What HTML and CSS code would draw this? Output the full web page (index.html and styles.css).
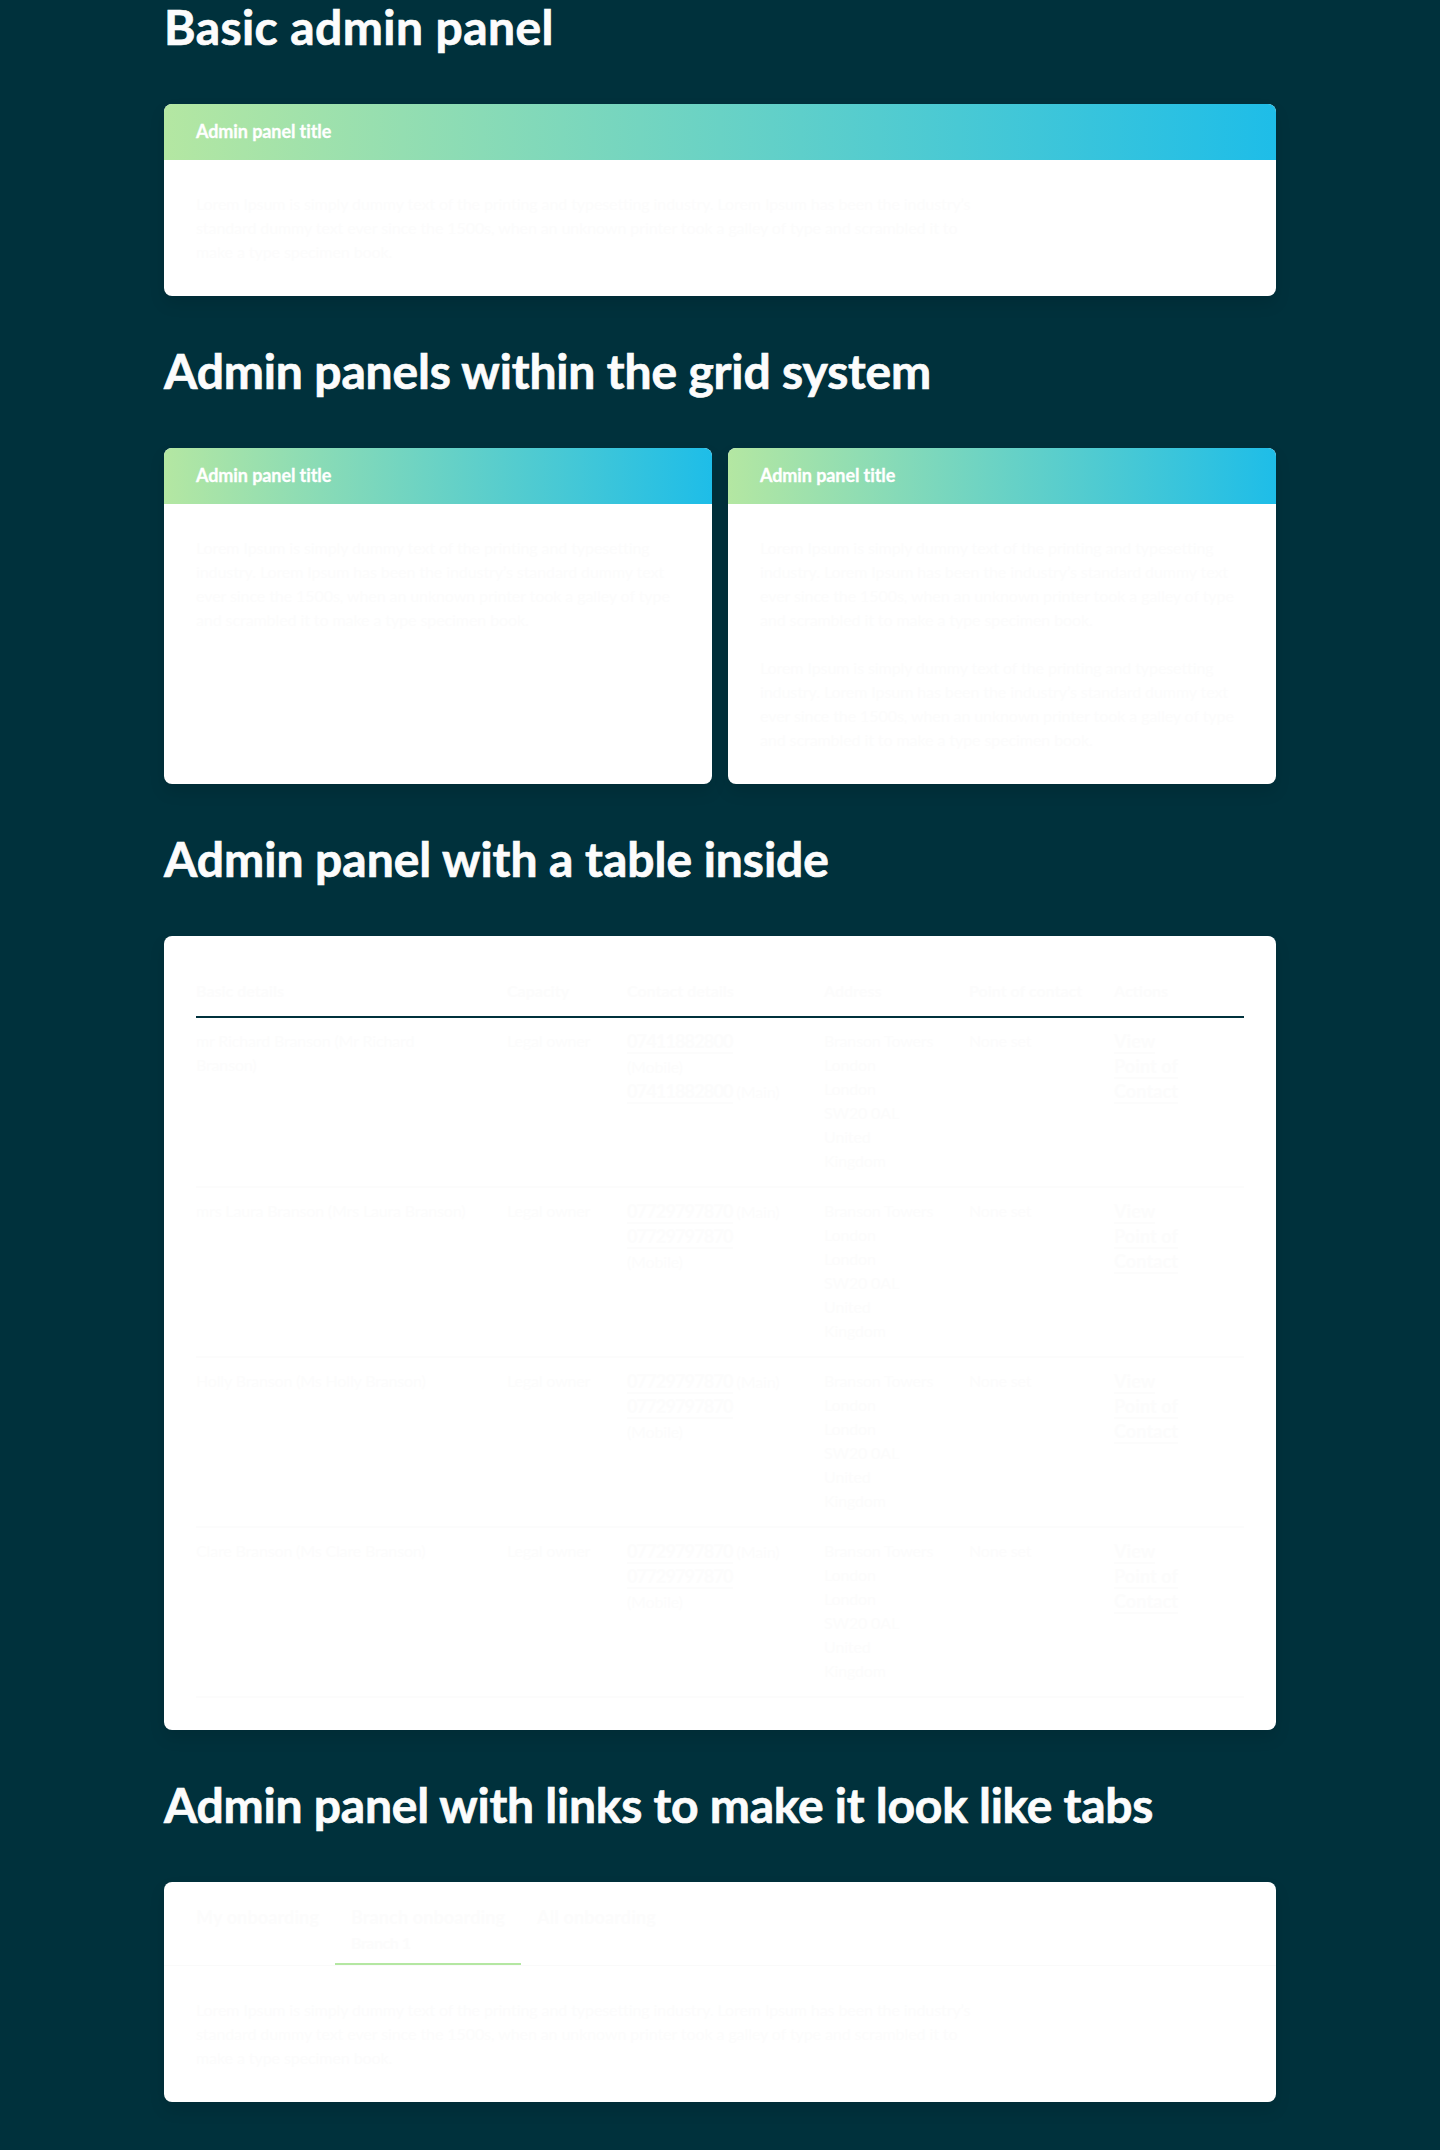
FILE: index.html
```html
<!DOCTYPE html>
<html lang="en">
<head>
<meta charset="utf-8">
<title>Admin panels</title>
<link rel="stylesheet" href="styles.css">
</head>
<body>
<main class="page">
  <h2 class="heading heading--basic">Basic admin panel</h2>
  <section class="panel">
    <h3 class="panel__title">Admin panel title</h3>
    <div class="panel__body">
      <p>Lorem Ipsum is simply dummy text of the printing and typesetting industry. Lorem Ipsum has been the industry’s<br>standard dummy text ever since the 1500s, when an unknown printer took a galley of type and scrambled it to<br>make a type specimen book.</p>
    </div>
  </section>

  <h2 class="heading heading--grid">Admin panels within the grid system</h2>
  <div class="grid">
    <section class="panel">
      <h3 class="panel__title">Admin panel title</h3>
      <div class="panel__body">
        <p>Lorem Ipsum is simply dummy text of the printing and typesetting<br>industry. Lorem Ipsum has been the industry’s standard dummy text<br>ever since the 1500s, when an unknown printer took a galley of type<br>and scrambled it to make a type specimen book.</p>
      </div>
    </section>
    <section class="panel">
      <h3 class="panel__title">Admin panel title</h3>
      <div class="panel__body">
        <p>Lorem Ipsum is simply dummy text of the printing and typesetting<br>industry. Lorem Ipsum has been the industry’s standard dummy text<br>ever since the 1500s, when an unknown printer took a galley of type<br>and scrambled it to make a type specimen book.</p>
        <p>Lorem Ipsum is simply dummy text of the printing and typesetting<br>industry. Lorem Ipsum has been the industry’s standard dummy text<br>ever since the 1500s, when an unknown printer took a galley of type<br>and scrambled it to make a type specimen book.</p>
      </div>
    </section>
  </div>

  <h2 class="heading heading--table">Admin panel with a table inside</h2>
  <section class="panel">
    <div class="panel__body">
      <table class="table">
        <colgroup><col class="col-basic"><col class="col-capacity"><col class="col-contact"><col class="col-address"><col class="col-point"><col class="col-actions"></colgroup>
        <thead>
          <tr><th>Basic details</th><th>Capacity</th><th>Contact details</th><th>Address</th><th>Point of contact</th><th>Actions</th></tr>
        </thead>
        <tbody>
          <tr>
            <td>mr Richard Branson (Mr Richard<br>Branson)</td>
            <td>Legal owner</td>
            <td class="links"><a class="link link--phone" href="#">07411882800</a><br>(Mobile)<br><a class="link link--phone" href="#">07411882800</a> (Main)</td>
            <td>Branson Towers<br>London<br>London<br>SW20 0AL<br>United<br>Kingdom</td>
            <td>None set</td>
            <td class="links"><a class="link" href="#">View</a><br><a class="link" href="#">Point of<br>Contact</a></td>
          </tr>
          <tr>
            <td>mrs Laura Branson (Mrs Laura Branson)</td>
            <td>Legal owner</td>
            <td class="links"><a class="link link--phone" href="#">07729797870</a> (Main)<br><a class="link link--phone" href="#">07729797870</a><br>(Mobile)</td>
            <td>Branson Towers<br>London<br>London<br>SW20 0AL<br>United<br>Kingdom</td>
            <td>None set</td>
            <td class="links"><a class="link" href="#">View</a><br><a class="link" href="#">Point of<br>Contact</a></td>
          </tr>
          <tr>
            <td>Holly Branson (Ms Holly Branson)</td>
            <td>Legal owner</td>
            <td class="links"><a class="link link--phone" href="#">07729797870</a> (Main)<br><a class="link link--phone" href="#">07729797870</a><br>(Mobile)</td>
            <td>Branson Towers<br>London<br>London<br>SW20 0AL<br>United<br>Kingdom</td>
            <td>None set</td>
            <td class="links"><a class="link" href="#">View</a><br><a class="link" href="#">Point of<br>Contact</a></td>
          </tr>
          <tr>
            <td>Clare Branson (Ms Clare Branson)</td>
            <td>Legal owner</td>
            <td class="links"><a class="link link--phone" href="#">07729797870</a> (Main)<br><a class="link link--phone" href="#">07729797870</a><br>(Mobile)</td>
            <td>Branson Towers<br>London<br>London<br>SW20 0AL<br>United<br>Kingdom</td>
            <td>None set</td>
            <td class="links"><a class="link" href="#">View</a><br><a class="link" href="#">Point of<br>Contact</a></td>
          </tr>
        </tbody>
      </table>
    </div>
  </section>

  <h2 class="heading heading--tabs">Admin panel with links to make it look like tabs</h2>
  <section class="panel">
    <nav class="tabs">
      <a class="tab" href="#">My onboarding</a>
      <a class="tab tab--active" href="#">Branch onboarding<small class="tab__note">Branch 1</small></a>
      <a class="tab" href="#">All onboarding</a>
    </nav>
    <div class="panel__body">
      <p>Lorem Ipsum is simply dummy text of the printing and typesetting industry. Lorem Ipsum has been the industry’s<br>standard dummy text ever since the 1500s, when an unknown printer took a galley of type and scrambled it to<br>make a type specimen book.</p>
    </div>
  </section>
</main>
</body>
</html>
```
FILE: styles.css
```css
* { box-sizing: border-box; }

body {
  margin: 0;
  background: #00313c;
  color: #fcfcfc;
  font: 400 16px/24px Lato, "Liberation Sans", sans-serif;
}

.page {
  width: 1112px;
  min-height: 2150px;
  margin: 0 auto;
  display: flow-root;
}

.heading {
  margin: 48px 0;
  padding-bottom: 2px;
  font-size: 48px;
  line-height: 54px;
  font-weight: 700;
  -webkit-text-stroke: 0.7px currentColor;
  white-space: nowrap;
}
.heading--basic { margin-top: 0; letter-spacing: 0.43px; }
.heading--grid { letter-spacing: -0.15px; }
.heading--table { letter-spacing: -0.02px; }
.heading--tabs { letter-spacing: -0.24px; }

.panel {
  overflow: hidden;
  border-radius: 8px;
  background: #fff;
  box-shadow: 0 8px 16px rgba(0, 0, 0, 0.1);
}

.panel__title {
  margin: 0;
  padding: 15px 32px 17px;
  background: linear-gradient(90deg, #b4e7a2, #1ebde8);
  color: #fff;
  font-size: 18px;
  line-height: 24px;
  font-weight: 700;
  letter-spacing: -0.09px;
  -webkit-text-stroke: 0.3px currentColor;
}

.panel__body { padding: 32px; }
.panel__body p {
  margin: 0;
  white-space: nowrap;
  letter-spacing: -0.08px;
}
.panel__body p + p { margin-top: 24px; }

.grid {
  display: grid;
  grid-template-columns: 1fr 1fr;
  gap: 16px;
}

.table {
  width: 100%;
  table-layout: fixed;
  border-collapse: separate;
  border-spacing: 0;
}
.col-basic { width: 311px; }
.col-capacity { width: 120px; }
.col-contact { width: 197px; }
.col-address { width: 145px; }
.col-point { width: 145px; }
.col-actions { width: 130px; }

.table th,
.table td {
  padding: 11px 0 13px;
  text-align: left;
  vertical-align: top;
  white-space: nowrap;
}
.table th {
  border-bottom: 2px solid #00313c;
  font-weight: 700;
}
.table td {
  border-bottom: 2px solid #fcfcfc;
  letter-spacing: -0.15px;
}
.table .links { line-height: 25px; }

.link {
  border-bottom: 2px solid #fcfcfc;
  color: inherit;
  font-size: 18px;
  font-weight: 700;
  letter-spacing: 0.1px;
  text-decoration: none;
}
.link--phone { letter-spacing: -0.84px; }

.tabs {
  display: flex;
  padding-left: 16px;
  border-bottom: 1px solid #fafafa;
}
.tab {
  padding: 22px 16px 8px;
  border-bottom: 2px solid transparent;
  color: inherit;
  font-size: 18px;
  line-height: 27px;
  font-weight: 700;
  letter-spacing: 0.13px;
  text-decoration: none;
}
.tab--active { border-bottom-color: #b4e7a2; }
.tab__note {
  display: block;
  font-size: 16px;
  line-height: 24px;
  letter-spacing: -0.47px;
}
```
